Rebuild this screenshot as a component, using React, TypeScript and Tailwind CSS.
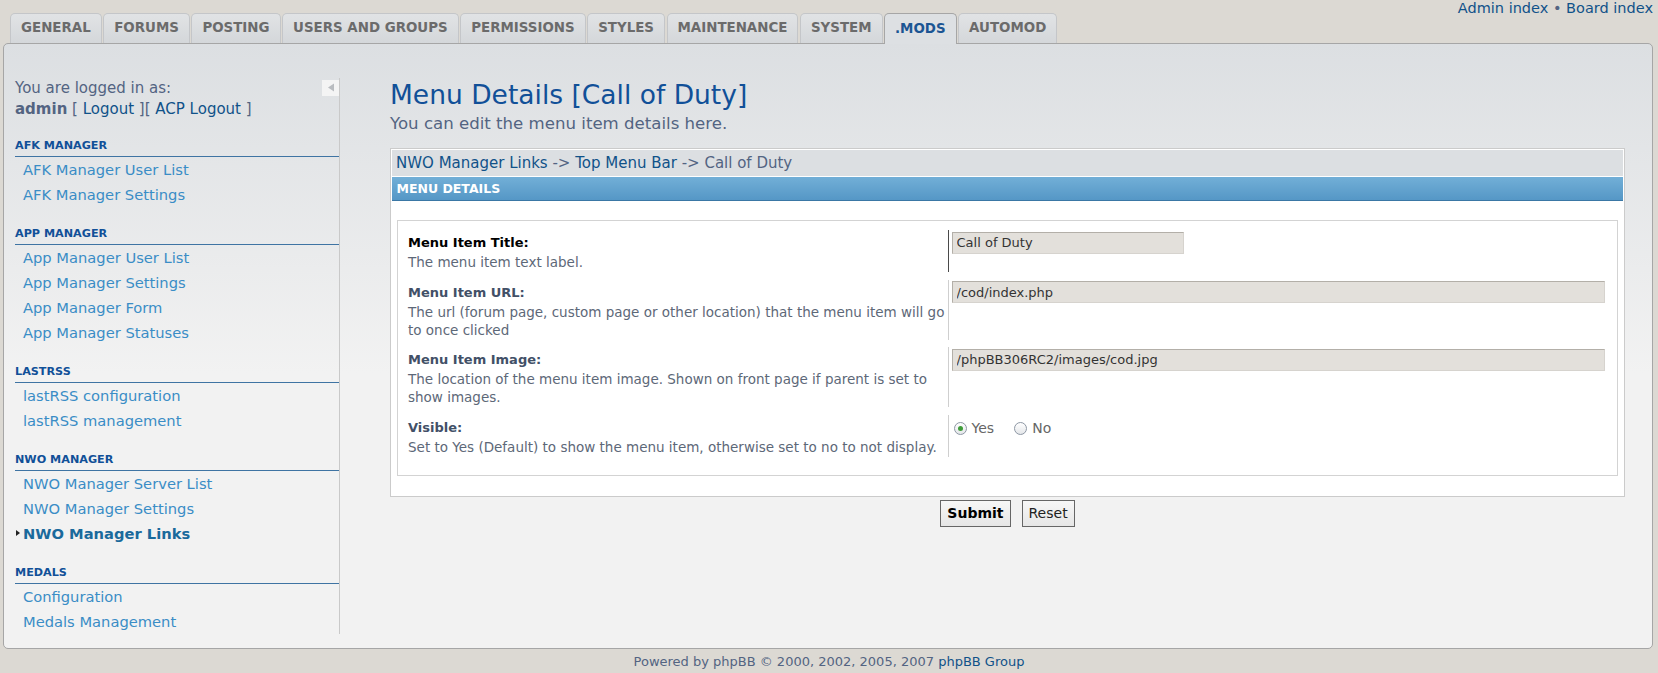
import clsx from 'clsx';

const tabs = [
  'GENERAL',
  'FORUMS',
  'POSTING',
  'USERS AND GROUPS',
  'PERMISSIONS',
  'STYLES',
  'MAINTENANCE',
  'SYSTEM',
  '.MODS',
  'AUTOMOD',
];

const sections = [
  { title: 'AFK MANAGER', items: ['AFK Manager User List', 'AFK Manager Settings'] },
  {
    title: 'APP MANAGER',
    items: ['App Manager User List', 'App Manager Settings', 'App Manager Form', 'App Manager Statuses'],
  },
  { title: 'LASTRSS', items: ['lastRSS configuration', 'lastRSS management'] },
  {
    title: 'NWO MANAGER',
    items: ['NWO Manager Server List', 'NWO Manager Settings', 'NWO Manager Links'],
  },
  { title: 'MEDALS', items: ['Configuration', 'Medals Management'] },
];

type Row = {
  label: string;
  desc: string[];
  hover?: boolean;
  value?: string;
  short?: boolean;
};

const rows: Row[] = [
  { label: 'Menu Item Title:', desc: ['The menu item text label.'], hover: true, value: 'Call of Duty', short: true },
  {
    label: 'Menu Item URL:',
    desc: ['The url (forum page, custom page or other location) that the menu item will go', 'to once clicked'],
    value: '/cod/index.php',
  },
  {
    label: 'Menu Item Image:',
    desc: ['The location of the menu item image. Shown on front page if parent is set to', 'show images.'],
    value: '/phpBB306RC2/images/cod.jpg',
  },
  {
    label: 'Visible:',
    desc: ['Set to Yes (Default) to show the menu item, otherwise set to no to not display.'],
  },
];

const Radio = ({ checked, label }: { checked?: boolean; label: string }) => (
  <span className="flex items-center gap-[5px]">
    <span className="w-[13px] h-[13px] rounded-full border border-[#8d97a4] bg-[linear-gradient(#ffffff,#e4e6e9)] flex items-center justify-center">
      {checked && <span className="w-[5px] h-[5px] rounded-full bg-[#3f9c3a]" />}
    </span>
    <span className="text-[14px] text-[#666]">{label}</span>
  </span>
);

const Sidebar = () => (
  <div className="w-[336px] shrink-0 pl-[11px] mt-[34px] border-r border-[#c9c9c9]">
    <div className="flex justify-between">
      <div className="text-[15px] leading-[21px] text-[#536482]">
        <div>You are logged in as:</div>
        <div>
          <b className="text-[#536482]">admin</b> [ <span className="text-[#105289]">Logout</span> ][{' '}
          <span className="text-[#105289]">ACP Logout</span> ]
        </div>
      </div>
      <div className="mt-[2px] w-[17px] h-[16px] bg-[#f4f4f4] flex items-center justify-center">
        <svg width="8" height="9" viewBox="0 0 8 9">
          <path d="M7 0.5 L1 4.5 L7 8.5 Z" fill="#b9bcc0" />
        </svg>
      </div>
    </div>
    {sections.map((s, si) => (
      <div key={s.title} className={clsx(si === 0 ? 'mt-[18px]' : 'mt-[19px]')}>
        <div className="text-[11.2px] leading-[16px] font-bold text-[#115098] pb-[2px] border-b border-[#3f74a3]">
          {s.title}
        </div>
        {s.items.map((it) => {
          const active = it === 'NWO Manager Links';
          return (
            <div
              key={it}
              className={clsx(
                'flex items-center pl-[1px] text-[14.7px] leading-[25px]',
                active ? 'font-bold text-[#1a6a9c]' : 'text-[#3a8dc6]'
              )}>
              <span className="w-[7px] flex items-center">
                {active && (
                  <svg width="4" height="6" viewBox="0 0 4 6">
                    <path d="M0 0 L4 3 L0 6 Z" fill="#222" />
                  </svg>
                )}
              </span>
              {it}
            </div>
          );
        })}
      </div>
    ))}
  </div>
);

const FormRow = ({ row }: { row: Row }) => (
  <div className="flex mb-[7.5px]">
    <div className="w-[45%] shrink-0 pt-[3px] pb-[1px]">
      <div className={clsx('text-[13px] leading-[20px] font-bold', row.hover ? 'text-black' : 'text-[#425067]')}>
        {row.label}
      </div>
      {row.desc.map((d) => (
        <div key={d} className="text-[13.5px] leading-[18px] text-[#5d6878] whitespace-nowrap">
          {d}
        </div>
      ))}
    </div>
    <div className={clsx('flex-1 border-l pl-[3px] pr-[2px]', row.hover ? 'border-[#4a4a4a]' : 'border-[#cfcfcf]')}>
      {row.value !== undefined ? (
        <input
          readOnly
          value={row.value}
          className={clsx(
            'h-[22px] bg-[#e3e0db] border border-[#b3afa8] border-b-[#d6d3ce] border-r-[#d6d3ce] px-[4px] text-[13px] text-[#333] outline-none',
            row.short ? 'w-[232px]' : 'w-full'
          )}
        />
      ) : (
        <div className="flex items-center gap-[20px] pl-[2px] pt-[3px]">
          <Radio checked label="Yes" />
          <Radio label="No" />
        </div>
      )}
    </div>
  </div>
);

export default function App() {
  return (
    <div className="min-h-screen bg-[#dcd9d3] font-['DejaVu_Sans',sans-serif]">
      <div className="flex items-start justify-between pl-[10px] pr-[5px]">
        <div className="flex items-end gap-[1.5px] pt-[12.5px]">
          {tabs.map((t) => {
            const active = t === '.MODS';
            return (
              <div
                key={t}
                className={clsx(
                  'px-[10px] flex items-center rounded-t-[5px] border border-b-0 text-[13.4px] font-bold leading-none',
                  active
                    ? 'h-[31px] -mb-px relative z-10 bg-[#dde0e3] border-[#a6a6a6] text-[#1b5593]'
                    : 'h-[30px] bg-[linear-gradient(#e1e3e5,#d4d7da)] border-[#c4c6c9] text-[#6b6b6b]'
                )}>
                {t}
              </div>
            );
          })}
        </div>
        <div className="text-[14.5px] leading-[16px] text-[#105289]">
          Admin index <span className="text-[#536482]">•</span> Board index
        </div>
      </div>

      <div className="ml-[3px] mr-[5px] border border-[#a6a6a6] rounded-[5px] bg-[linear-gradient(to_bottom,#dcdfe2,#f2f2f2_330px)] flex pb-[14px]">
        <Sidebar />
        <div className="flex-1 pl-[50px] pr-[27px] pt-[35.5px]">
          <h1 className="text-[26.5px] leading-[32px] text-[#115098] font-normal">Menu Details [Call of Duty]</h1>
          <p className="mt-[3px] text-[16.6px] leading-[20px] text-[#536482]">You can edit the menu item details here.</p>

          <div className="mt-[13.5px] bg-white border border-[#cbcbcb] p-px">
            <div className="h-[26px] bg-[#dcdfe2] pl-[4px] text-[15px] leading-[26px] text-[#536482]">
              <span className="text-[#105289]">NWO Manager Links</span> -&gt;{' '}
              <span className="text-[#105289]">Top Menu Bar</span> -&gt; Call of Duty
            </div>
            <div className="mt-px h-[24px] bg-[linear-gradient(#72afd7,#5597c6)] border-b border-[#3a77a5] pl-[4.5px] text-[12.5px] leading-[23px] font-bold text-white">
              MENU DETAILS
            </div>
            <div className="mx-[5px] mt-[19px] mb-[19px] border border-[#d3d3d3] px-[10px] pt-[9.5px] pb-[11px]">
              {rows.map((r) => (
                <FormRow key={r.label} row={r} />
              ))}
            </div>
          </div>

          <div className="flex justify-center gap-[11px] mt-[3px]">
            <button className="h-[27px] px-[6px] border border-[#666] bg-[linear-gradient(#f7f7f7,#e6e6e6)] text-[14px] font-bold text-black">
              Submit
            </button>
            <button className="h-[27px] px-[6px] border border-[#666] bg-[linear-gradient(#f7f7f7,#e6e6e6)] text-[14px] text-[#222]">
              Reset
            </button>
          </div>
        </div>
      </div>

      <div className="pt-[5px] text-center text-[13px] leading-[16px] text-[#536482]">
        Powered by phpBB © 2000, 2002, 2005, 2007 <span className="text-[#105289]">phpBB Group</span>
      </div>
    </div>
  );
}
